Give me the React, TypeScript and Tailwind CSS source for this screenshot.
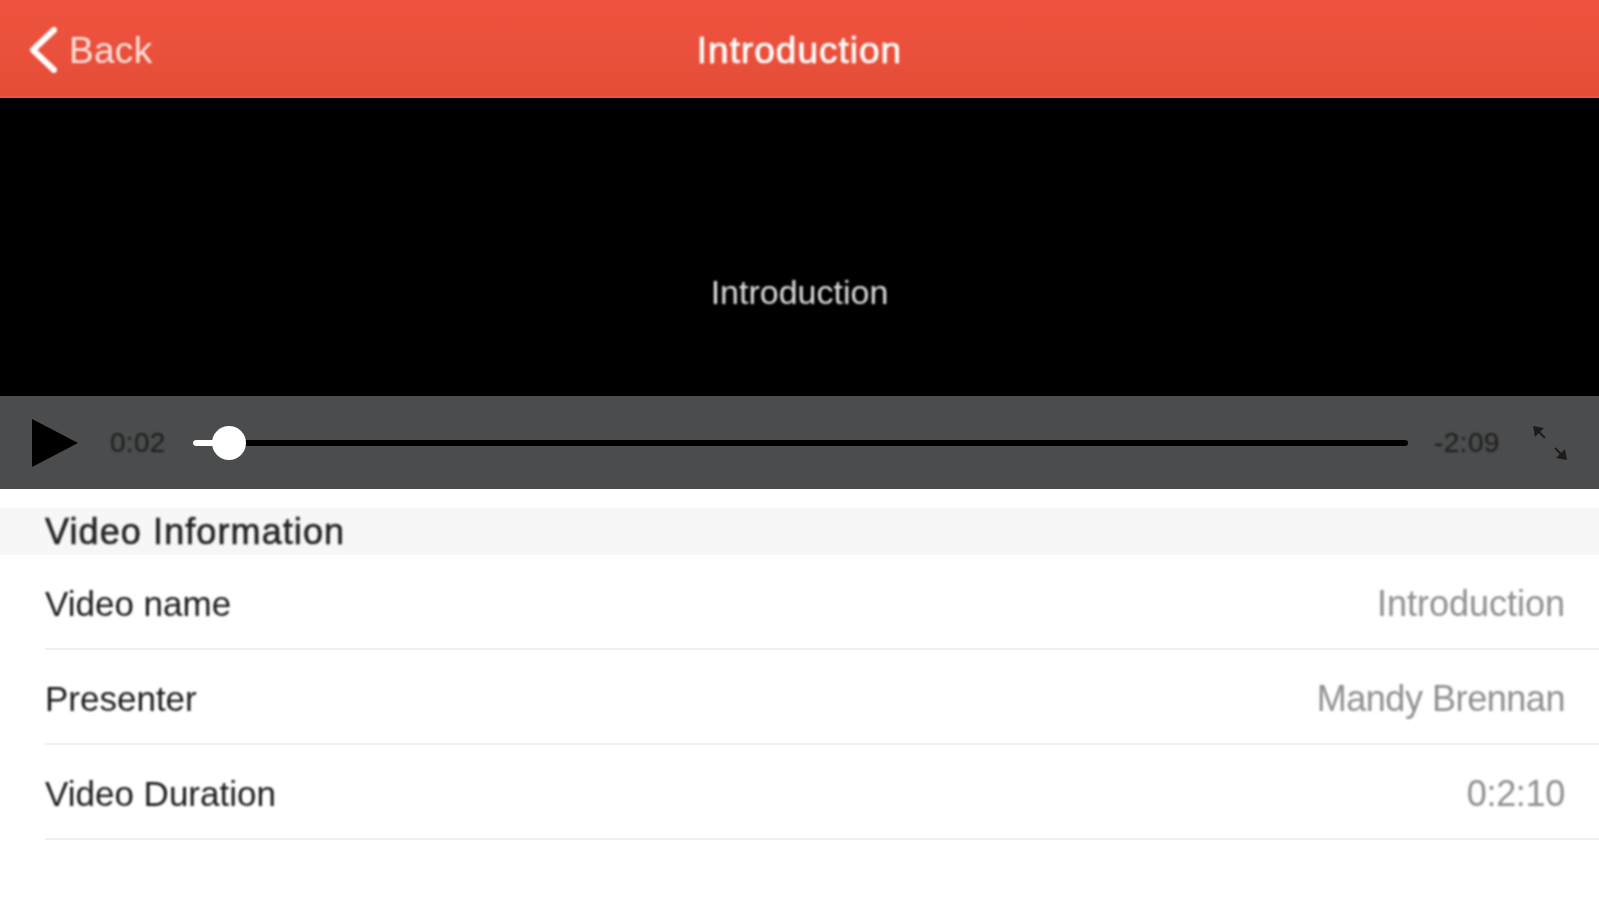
const rows = [
  { label: 'Video name', value: 'Introduction', valueClass: '' },
  { label: 'Presenter', value: 'Mandy Brennan', valueClass: 'tracking-[-0.45px]' },
  { label: 'Video Duration', value: '0:2:10', valueClass: 'tracking-[-0.3px]' },
];

const App = () => {
  return (
    <div className="h-[900px] w-full overflow-hidden bg-white [font-family:'Liberation_Sans',Arial,sans-serif]">
      <header className="relative flex h-[98px] items-center justify-center border-b-2 border-b-[#ef533c] bg-gradient-to-b from-[#ef533f] to-[#e54d37] pt-[4px]">
        <div className="absolute left-[29px] top-0 flex h-full items-center gap-[12px] pt-[4px] text-[#fbe3df]">
          <svg width="28" height="46" viewBox="0 0 28 46" fill="none" className="blur-[0.8px]">
            <path d="M25 3 L4 23 L25 43" stroke="#fff" strokeWidth="6" strokeLinecap="round" strokeLinejoin="round" />
          </svg>
          <span className="text-[37px] leading-none tracking-[0.3px] blur-[0.8px]">Back</span>
        </div>
        <h1 className="text-[37px] leading-none tracking-[1px] text-white blur-[0.8px] [-webkit-text-stroke:0.7px_#ffffff]">Introduction</h1>
      </header>

      <div className="flex h-[298px] items-center justify-center bg-black pt-[90px]">
        <span className="text-[34px] leading-none text-[#dddddd] blur-[0.8px]">Introduction</span>
      </div>

      <div className="flex h-[93px] items-center bg-[#4b4c4d]">
        <svg width="46" height="48" viewBox="0 0 46 48" className="ml-[32px] shrink-0 blur-[0.5px]">
          <path d="M0 0 L46 24 L0 48 Z" fill="#000" />
        </svg>
        <span className="ml-[32px] w-[56px] text-[28px] leading-none tracking-[0.3px] text-[#1c1c1c] blur-[1px]">0:02</span>
        <div className="relative ml-[27px] h-[6px] flex-1 rounded-full bg-black blur-[0.4px]">
          <div className="absolute left-0 top-0 h-full w-[24px] rounded-full bg-white" />
          <div className="absolute left-[19px] top-[-14px] h-[34px] w-[34px] rounded-full bg-white" />
        </div>
        <span className="ml-[26px] w-[67px] text-[28px] leading-none tracking-[0.4px] text-[#1c1c1c] blur-[1px]">-2:09</span>
        <svg width="36" height="36" viewBox="0 0 36 36" fill="none" className="ml-[31px] mr-[31px] shrink-0 blur-[0.5px]">
          <path d="M4 4 L13 13" stroke="#1c1c1c" strokeWidth="2" />
          <path d="M23 23 L33 33" stroke="#1c1c1c" strokeWidth="2" />
          <path d="M1 1 L12 3 L3 12 Z" fill="#1c1c1c" />
          <path d="M35 35 L24 33 L33 24 Z" fill="#1c1c1c" />
        </svg>
      </div>

      <div className="mt-[19px] flex h-[47px] items-center bg-[#f7f7f7] pl-[45px]">
        <h2 className="text-[36px] leading-none tracking-[1.1px] text-[#222] blur-[0.8px] [-webkit-text-stroke:0.6px_#222222]">Video Information</h2>
      </div>

      <div className="pl-[45px]">
        {rows.map((row) => (
          <div key={row.label} className="flex h-[95px] items-center justify-between border-b-2 border-b-[#f0f0f0] pt-[4px] pr-[34px]">
            <span className="text-[35px] leading-none text-[#1a1a1a] blur-[0.8px]">{row.label}</span>
            <span className={`text-[36px] leading-none text-[#8f8f8f] blur-[0.8px] ${row.valueClass}`}>{row.value}</span>
          </div>
        ))}
      </div>
    </div>
  );
};

export default App;
